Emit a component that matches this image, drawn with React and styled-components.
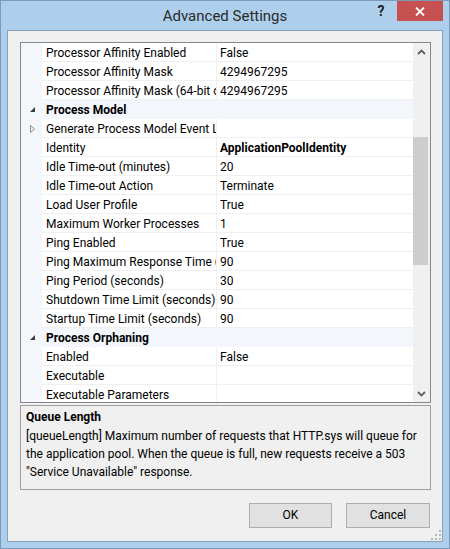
import React from "react"
import styled, { createGlobalStyle } from "styled-components"

const GlobalStyle = createGlobalStyle`
  html, body {
    margin: 0;
    padding: 0;
    background: #ffffff;
  }

  body {
    font-family: Roboto, "Liberation Sans", sans-serif;
    font-size: 12px;
    color: #000;
  }
`

const Window = styled.div`
  box-sizing: border-box;
  width: 450px;
  height: 549px;
  display: flex;
  flex-direction: column;
  background: #adcfeb;
  border: 1px solid #7d9bb8;
`

const TitleBar = styled.div`
  height: 29px;
  display: grid;
  grid-template-columns: 1fr auto 1fr;
  align-items: start;
`

const Title = styled.div`
  grid-column: 2;
  align-self: center;
  font-size: 15px;
  color: #2b2b2b;
`

const Controls = styled.div`
  grid-column: 3;
  justify-self: end;
  display: flex;
  align-items: flex-start;
  margin-right: 6px;
`

const Help = styled.span`
  width: 30px;
  height: 20px;
  display: flex;
  align-items: center;
  justify-content: center;
  font-weight: bold;
  font-size: 14px;
  color: #222;
  margin-right: 1px;
`

const Close = styled.div`
  width: 46px;
  height: 20px;
  display: flex;
  align-items: center;
  justify-content: center;
  background: #c75050;
`

const Client = styled.div`
  position: relative;
  box-sizing: border-box;
  height: 512px;
  margin: 0 6px;
  background: #f0f0f0;
  border: 1px solid #86a2bf;
  padding: 11px 11px 0 12px;
  display: flex;
  flex-direction: column;
`

const Grid = styled.div`
  height: 361px;
  box-sizing: border-box;
  border: 1px solid #828790;
  display: flex;
  background: #fff;
`

const Viewport = styled.div`
  flex: 1;
  overflow: hidden;
`

const Row = styled.div`
  display: grid;
  grid-template-columns: 21px 175px 1fr;
  height: 19px;
  background: ${(p) => (p.$category ? "#f3f6fb" : "#fff")};
`

const Gutter = styled.div`
  background: #f3f6fb;
  display: flex;
  align-items: center;
  justify-content: center;
  padding-left: 1px;
`

const Cell = styled.div`
  box-sizing: border-box;
  height: 19px;
  border-bottom: 1px solid ${(p) => (p.$category ? "#f3f6fb" : "#f0f0f0")};
  border-right: ${(p) => (p.$name && !p.$category ? "1px solid #f0f0f0" : "none")};
  padding-left: ${(p) => (p.$name ? "4px" : "3px")};
  padding-top: 1px;
  line-height: 18px;
  white-space: nowrap;
  overflow: hidden;
  font-weight: ${(p) => (p.$bold ? "bold" : "normal")};
  grid-column: ${(p) => (p.$span ? "2 / 4" : "auto")};
`

const Scrollbar = styled.div`
  width: 17px;
  display: flex;
  flex-direction: column;
  background: #f0f0f0;
`

const ArrowBox = styled.div`
  height: 17px;
  display: flex;
  align-items: center;
  justify-content: center;
`

const Track = styled.div`
  flex: 1;
`

const Thumb = styled.div`
  width: 15px;
  background: #cdcdcd;
`

const Description = styled.div`
  margin-top: 2px;
  height: 85px;
  box-sizing: border-box;
  border: 1px solid #a0a0a0;
  padding: 2px 6px 0 5px;
  line-height: 18px;
`

const DescTitle = styled.div`
  font-weight: bold;
  margin-bottom: 1px;
`

const Buttons = styled.div`
  margin-top: 13px;
  margin-right: 1px;
  display: flex;
  justify-content: flex-end;
  gap: 14px;
`

const Button = styled.button`
  box-sizing: border-box;
  width: ${(p) => p.$width}px;
  height: 25px;
  background: #e1e1e1;
  border: 1px solid #adadad;
  font-family: inherit;
  font-size: 12px;
  color: #000;
  padding: 0 0 1px;
`

const Grip = styled.svg`
  position: absolute;
  right: 1px;
  bottom: 1px;
`

const rows = [
  { name: "Processor Affinity Enabled", value: "False" },
  { name: "Processor Affinity Mask", value: "4294967295" },
  { name: "Processor Affinity Mask (64-bit option)", value: "4294967295" },
  { category: "Process Model" },
  { name: "Generate Process Model Event Log Entry", value: "", expandable: true },
  { name: "Identity", value: "ApplicationPoolIdentity", bold: true },
  { name: "Idle Time-out (minutes)", value: "20" },
  { name: "Idle Time-out Action", value: "Terminate" },
  { name: "Load User Profile", value: "True" },
  { name: "Maximum Worker Processes", value: "1" },
  { name: "Ping Enabled", value: "True" },
  { name: "Ping Maximum Response Time (seconds)", value: "90" },
  { name: "Ping Period (seconds)", value: "30" },
  { name: "Shutdown Time Limit (seconds)", value: "90" },
  { name: "Startup Time Limit (seconds)", value: "90" },
  { category: "Process Orphaning" },
  { name: "Enabled", value: "False" },
  { name: "Executable", value: "" },
  { name: "Executable Parameters", value: "" },
]

const Collapse = () => (
  <svg width="7" height="7" viewBox="0 0 7 7">
    <path d="M6 1 L6 6 L1 6 Z" fill="#3c3c3c" />
  </svg>
)

const Expand = () => (
  <svg width="7" height="10" viewBox="0 0 7 10">
    <path d="M1.5 1.5 L5.5 5 L1.5 8.5 Z" fill="none" stroke="#8a8a8a" strokeWidth="1" />
  </svg>
)

const Chevron = ({ down }) => (
  <svg width="9" height="6" viewBox="0 0 9 6">
    <path
      d={down ? "M1 1 L4.5 4.5 L8 1" : "M1 5 L4.5 1.5 L8 5"}
      fill="none"
      stroke="#606060"
      strokeWidth="1.8"
    />
  </svg>
)

const App = () => {
  return (
    <>
      <GlobalStyle />
      <Window>
        <TitleBar>
          <Title>Advanced Settings</Title>
          <Controls>
            <Help>?</Help>
            <Close>
              <svg width="10" height="9" viewBox="0 0 10 9">
                <path d="M1 0.5 L9 8.5 M9 0.5 L1 8.5" stroke="#fff" strokeWidth="1.8" />
              </svg>
            </Close>
          </Controls>
        </TitleBar>
        <Client>
          <Grid>
            <Viewport>
              {rows.map((r, i) =>
                r.category ? (
                  <Row key={i} $category>
                    <Gutter>
                      <Collapse />
                    </Gutter>
                    <Cell $name $category $bold $span>
                      {r.category}
                    </Cell>
                  </Row>
                ) : (
                  <Row key={i}>
                    <Gutter>{r.expandable && <Expand />}</Gutter>
                    <Cell $name>{r.name}</Cell>
                    <Cell $bold={r.bold}>{r.value}</Cell>
                  </Row>
                )
              )}
            </Viewport>
            <Scrollbar>
              <ArrowBox>
                <Chevron />
              </ArrowBox>
              <Track>
                <Thumb style={{ marginTop: 77, height: 128 }} />
              </Track>
              <ArrowBox>
                <Chevron down />
              </ArrowBox>
            </Scrollbar>
          </Grid>
          <Description>
            <DescTitle>Queue Length</DescTitle>
            [queueLength] Maximum number of requests that HTTP.sys will queue for
            the application pool. When the queue is full, new requests receive a
            503 "Service Unavailable" response.
          </Description>
          <Buttons>
            <Button $width={83}>OK</Button>
            <Button $width={84}>Cancel</Button>
          </Buttons>
          <Grip width="10" height="10" viewBox="0 0 10 10">
            <g fill="#b8b8b8">
              <rect x="8" y="0" width="2" height="2" />
              <rect x="4" y="4" width="2" height="2" />
              <rect x="8" y="4" width="2" height="2" />
              <rect x="0" y="8" width="2" height="2" />
              <rect x="4" y="8" width="2" height="2" />
              <rect x="8" y="8" width="2" height="2" />
            </g>
          </Grip>
        </Client>
      </Window>
    </>
  )
}

export default App
